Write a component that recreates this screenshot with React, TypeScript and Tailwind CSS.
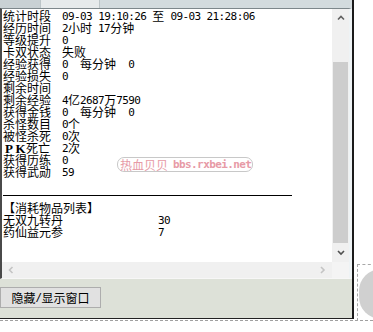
import React from "react";

const CJK = "font-['Noto_Sans_CJK_SC',sans-serif] text-[12px] leading-[12px] align-top";
const ASC = "font-['DejaVu_Sans_Mono',monospace] text-[11px] tracking-[-0.6px] leading-[14px] align-top";

function Run({ s }: { s: string }) {
  const parts: { t: string; c: boolean }[] = [];
  for (const ch of s) {
    const c = ch.charCodeAt(0) > 127;
    const last = parts[parts.length - 1];
    if (last && last.c === c) last.t += ch;
    else parts.push({ t: ch, c });
  }
  return (
    <>
      {parts.map((p, i) => (
        <span key={i} className={p.c ? CJK : ASC}>
          {p.t}
        </span>
      ))}
    </>
  );
}

const rows: [string, string][] = [
  ["统计时段", "09-03 19:10:26 至 09-03 21:28:06"],
  ["经历时间", "2小时 17分钟"],
  ["等级提升", "0"],
  ["卡双状态", "失败"],
  ["经验获得", "0  每分钟  0"],
  ["经验损失", "0"],
  ["剩余时间", ""],
  ["剩余经验", "4亿2687万7590"],
  ["获得金钱", "0  每分钟  0"],
  ["杀怪数目", "0个"],
  ["被怪杀死", "0次"],
  ["PK死亡", "2次"],
  ["获得历练", "0"],
  ["获得武勋", "59"],
];

function Label({ s }: { s: string }) {
  if (s === "PK死亡") {
    return (
      <>
        <span className="inline-block w-[12px] text-center font-['Liberation_Serif',serif] font-bold text-[13px] leading-[13px] align-top">P</span>
        <span className="inline-block w-[11px] text-center font-['Liberation_Serif',serif] font-bold text-[13px] leading-[13px] align-top">K</span>
        <span className={CJK}>死亡</span>
      </>
    );
  }
  return <span className={CJK}>{s}</span>;
}

function Chev({ dir, color }: { dir: "up" | "down" | "left" | "right"; color: string }) {
  const d =
    dir === "up"
      ? "M1 4.5 L4 1.5 L7 4.5"
      : dir === "down"
      ? "M1 1 L4 4 L7 1"
      : dir === "left"
      ? "M4.5 1 L1.5 4 L4.5 7"
      : "M1 1 L4 4 L1 7";
  const w = dir === "up" || dir === "down" ? 8 : 6;
  const h = dir === "up" || dir === "down" ? 6 : 8;
  return (
    <svg width={w} height={h} viewBox={`0 0 ${w} ${h}`}>
      <path d={d} stroke={color} strokeWidth="1.6" fill="none" />
    </svg>
  );
}

export default function App() {
  return (
    <div className="w-[373px] h-[332px] bg-white relative overflow-hidden text-black">
      <div className="flex h-[319px]">
        <div className="w-[352px] flex flex-col">
          {/* top strip */}
          <div className="h-[8px] flex bg-[#d3dbde]">
            <div className="w-[40px] bg-[#c9d1d4]" />
            <div className="w-[60px] bg-[#e6eaeb] border-x border-[#bcc5c8]" />
          </div>
          {/* sunken control */}
          <div className="flex flex-col border-t border-t-[#7d878b] border-l-2 border-l-[#4a4a4a] border-r-[3px] border-r-[#eef3f5] border-b border-b-[#f7f7f7]">
            <div className="flex h-[253px]">
              <div className="w-[330px] bg-white pl-[1px] pt-[1px]">
                {rows.map(([l, v]) => (
                  <div key={l} className="flex h-[12px] leading-[12px] whitespace-pre">
                    <div className="w-[59px] shrink-0">
                      <Label s={l} />
                    </div>
                    <div>
                      <Run s={v} />
                    </div>
                  </div>
                ))}
                <div className="h-[17px]" />
                <div className="w-[289px] h-[1px] bg-black" />
                <div className="mt-[6px] h-[12px] leading-[12px]">
                  <span className={CJK}>【消耗物品列表】</span>
                </div>
                <div className="flex h-[12px] leading-[12px]">
                  <div className="w-[155px] shrink-0">
                    <span className={CJK}>无双九转丹</span>
                  </div>
                  <div>
                    <Run s="30" />
                  </div>
                </div>
                <div className="flex h-[12px] leading-[12px]">
                  <div className="w-[155px] shrink-0">
                    <span className={CJK}>药仙益元参</span>
                  </div>
                  <div>
                    <Run s="7" />
                  </div>
                </div>
              </div>
              {/* vertical scrollbar */}
              <div className="w-[17px] bg-[#f0f0f0] flex flex-col">
                <div className="h-[17px] flex items-center justify-center">
                  <Chev dir="up" color="#606060" />
                </div>
                <div className="h-[36px]" />
                <div className="h-[181px] mx-[1px] bg-[#cdcdcd]" />
                <div className="flex-1 flex items-center justify-center">
                  <Chev dir="down" color="#505050" />
                </div>
              </div>
            </div>
            {/* horizontal scrollbar */}
            <div className="flex h-[16px]">
              <div className="w-[330px] bg-[#f0f0f0] flex items-center justify-between px-[6px]">
                <Chev dir="left" color="#c4c4c4" />
                <Chev dir="right" color="#c4c4c4" />
              </div>
              <div className="w-[17px] bg-[#f4f4f4]" />
            </div>
          </div>
          {/* bottom panel */}
          <div className="h-[40px] bg-[#dde1d8] border-b border-b-[#222] pt-[8px]">
            <div className="w-[101px] h-[21px] bg-[#e1e1e1] border border-[#adadad] flex items-center justify-center whitespace-pre leading-[12px]">
              <Run s="隐藏/显示窗口" />
            </div>
          </div>
        </div>
        <div className="w-[2px] bg-[#1a1a1a]" />
        <div className="flex-1 bg-white" />
      </div>
      <div className="mt-[1px] border-t border-dashed border-[#a0a0a0]" />

      {/* watermark */}
      <div className="absolute left-[117px] top-[157px] w-[136px] h-[15px] rounded-[7px] border border-[#c8c8c8] flex items-center pl-[2px] gap-[5px] text-[#e79aa6]">
        <span className="font-['Noto_Sans_CJK_SC',sans-serif] text-[12px] leading-[12px]">热血贝贝</span>
        <span className="font-['DejaVu_Sans_Mono',monospace] font-bold text-[11px] tracking-[-0.6px] leading-[12px]">bbs.rxbei.net</span>
      </div>

      {/* neighbouring window fragment */}
      <div className="absolute left-[357px] top-[264px] w-[30px] h-[57px] border-l border-t border-dashed border-[#a8a8a8]" />
      <div className="absolute left-[359px] top-[269px] w-[44px] h-[50px] rounded-full bg-[#d0d0d0]" />
    </div>
  );
}
